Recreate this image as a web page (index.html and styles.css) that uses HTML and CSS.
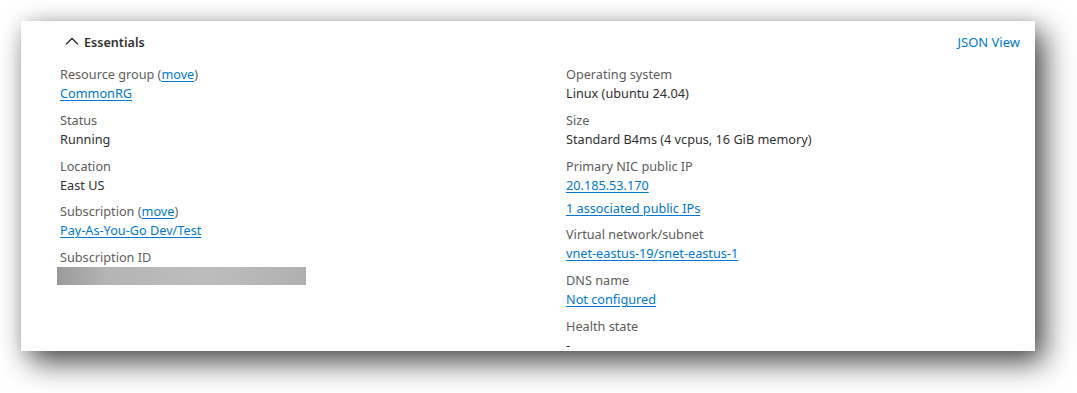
FILE: index.html
```html
<!DOCTYPE html>
<html>
<head>
<meta charset="utf-8">
<link rel="stylesheet" href="styles.css">
</head>
<body>
<div class="card">
  <div class="header">
    <button class="toggle">
      <svg class="chev" width="14" height="8" viewBox="0 0 14 8"><path d="M1 7.3 L7 1.5 L13 7.3" fill="none" stroke="#323130" stroke-width="1.4"/></svg>
      <span class="title">Essentials</span>
    </button>
    <a class="json" href="#">JSON View</a>
  </div>
  <div class="grid">
    <div class="col">
      <div class="item"><div class="label">Resource group (<a href="#">move</a>)</div><div class="value"><a href="#">CommonRG</a></div></div>
      <div class="item"><div class="label">Status</div><div class="value">Running</div></div>
      <div class="item"><div class="label">Location</div><div class="value">East US</div></div>
      <div class="item"><div class="label">Subscription (<a href="#">move</a>)</div><div class="value"><a href="#">Pay-As-You-Go Dev/Test</a></div></div>
      <div class="item"><div class="label">Subscription ID</div><div class="redact"></div></div>
    </div>
    <div class="col">
      <div class="item"><div class="label">Operating system</div><div class="value">Linux (ubuntu 24.04)</div></div>
      <div class="item"><div class="label">Size</div><div class="value">Standard B4ms (4 vcpus, 16 GiB memory)</div></div>
      <div class="item"><div class="label">Primary NIC public IP</div><div class="value"><a href="#">20.185.53.170</a></div><div class="value extra"><a href="#">1 associated public IPs</a></div></div>
      <div class="item"><div class="label">Virtual network/subnet</div><div class="value"><a href="#">vnet-eastus-19/snet-eastus-1</a></div></div>
      <div class="item"><div class="label">DNS name</div><div class="value"><a href="#">Not configured</a></div></div>
      <div class="item"><div class="label">Health state</div><div class="value">-</div></div>
    </div>
  </div>
</div>
</body>
</html>
```

FILE: styles.css
```css
* { box-sizing: border-box; }
html, body { margin: 0; background: #ffffff; }
body {
  padding: 21px;
  min-height: 393px;
  font-family: "Noto Sans", "Open Sans", sans-serif;
  font-size: 12.7px;
  color: #323130;
}
.card {
  width: 1014px;
  height: 330px;
  background: #fff;
  box-shadow: 9px 11px 28px rgba(0,0,0,0.72), 0 0 14px rgba(0,0,0,0.08);
  overflow: hidden;
  padding: 11px 15px 0 39px;
}
.header {
  display: flex;
  align-items: center;
  justify-content: space-between;
  height: 20px;
}
.toggle {
  display: flex;
  align-items: center;
  gap: 5px;
  border: 0;
  background: none;
  padding: 0 0 0 5px;
  font: inherit;
  color: #323130;
}
.chev { display: block; margin-top: -2px; }
.title { font-weight: 600; font-size: 12.6px; }
.json { color: #0078d4; text-decoration: none; font-size: 13px; }
.grid {
  display: grid;
  grid-template-columns: 506px 1fr;
  margin-top: 13px;
}
.col { display: flex; flex-direction: column; gap: 7.75px; }
.item { line-height: 19px; }
.label { color: #605e5c; }
.value { color: #323130; }
.value.extra { margin-top: 4px; }
a { color: #0078d4; text-decoration: underline; text-underline-offset: 2px; }
.redact {
  margin: 0 0 0 -3px;
  width: 249px;
  height: 18px;
  background: linear-gradient(90deg, #9a9a9a 0%, #b4b4b4 20%, #bdbdbd 60%, #b0b0b0 100%);
}
```
